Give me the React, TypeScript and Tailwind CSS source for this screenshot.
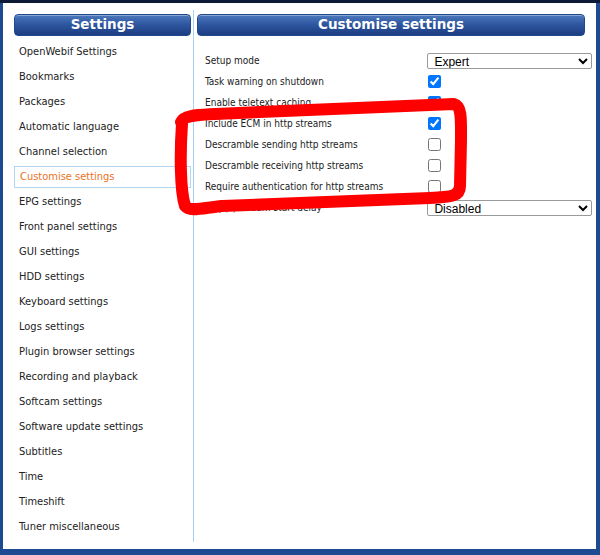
const menu = [
  "OpenWebif Settings",
  "Bookmarks",
  "Packages",
  "Automatic language",
  "Channel selection",
  "Customise settings",
  "EPG settings",
  "Front panel settings",
  "GUI settings",
  "HDD settings",
  "Keyboard settings",
  "Logs settings",
  "Plugin browser settings",
  "Recording and playback",
  "Softcam settings",
  "Software update settings",
  "Subtitles",
  "Time",
  "Timeshift",
  "Tuner miscellaneous",
];

type Row =
  | { label: string; kind: "select"; value: string }
  | { label: string; kind: "check"; checked: boolean };

const rows: Row[] = [
  { label: "Setup mode", kind: "select", value: "Expert" },
  { label: "Task warning on shutdown", kind: "check", checked: true },
  { label: "Enable teletext caching", kind: "check", checked: true },
  { label: "Include ECM in http streams", kind: "check", checked: true },
  { label: "Descramble sending http streams", kind: "check", checked: false },
  { label: "Descramble receiving http streams", kind: "check", checked: false },
  { label: "Require authentication for http streams", kind: "check", checked: false },
  { label: "Http(s) stream start delay", kind: "select", value: "Disabled" },
];

const headerCls =
  "h-[22px] rounded-[4px] border border-[#21478c] bg-gradient-to-b from-[#4b78bd] via-[#2d559d] to-[#1c3d82] shadow-[inset_0_1px_0_rgba(255,255,255,0.35)] flex items-center justify-center text-white font-bold text-[13.5px] leading-none font-['DejaVu_Sans',sans-serif]";

const App = () => {
  return (
    <div className="relative w-[600px] h-[555px] bg-[#1d4b92] border-t-[3px] border-t-[#0c1a36] pl-[3px] pr-[4px] pb-[6px] font-['DejaVu_Sans_Condensed','DejaVu_Sans',sans-serif] text-[#222]">
      <div className="h-full bg-white flex pl-[11px] pt-[7px] pb-[7px]">
        {/* left menu */}
        <div className="w-[177px] mt-[4px] flex flex-col">
          <div className={headerCls}>Settings</div>
          <div className="mt-[5px] flex flex-col">
            {menu.map((m) => (
              <div
                key={m}
                className={`h-[22px] mb-[3px] pl-[5px] flex items-center text-[11px] ${
                  m === "Customise settings"
                    ? "border border-[#b5d4ee] text-[#e8731f] pl-[4px]"
                    : ""
                }`}
              >
                {m}
              </div>
            ))}
          </div>
        </div>

        <div className="ml-[2px] w-px bg-[#a9d0f2]" />

        {/* right panel */}
        <div className="ml-[3px] w-[395px] mt-[4px] flex flex-col">
          <div className={`${headerCls} w-[388px]`}>Customise settings</div>
          <div className="mt-[14px] flex flex-col">
            {rows.map((r) => (
              <div key={r.label} className="h-[21px] flex items-center pl-[8px] text-[10px]">
                <div className="w-[223px]">{r.label}</div>
                {r.kind === "select" ? (
                  <select
                    defaultValue={r.value}
                    className="w-[165px] h-[16px] border border-[#9a9a9a] rounded-[2px] bg-white text-[12px] leading-none font-['Liberation_Sans',sans-serif] text-black pl-[2px]"
                  >
                    <option>{r.value}</option>
                  </select>
                ) : (
                  <input
                    type="checkbox"
                    defaultChecked={r.checked}
                    className="m-0 w-[13px] h-[13px]"
                  />
                )}
              </div>
            ))}
          </div>
        </div>
      </div>

      {/* red hand-drawn marking */}
      <svg
        className="absolute left-0 top-[-3px] pointer-events-none"
        width="600"
        height="555"
        viewBox="0 0 600 555"
      >
        <path
          d="M181 122 C184 115 198 115 215 114 L454 104 C462 106 461 120 461 140 L460 186 C460 196 452 197 430 198 L222 206 C202 208 190 212 185 206 C180 190 180 152 182 124"
          fill="none"
          stroke="#ff0000"
          strokeWidth="12"
          strokeLinecap="round"
          strokeLinejoin="round"
        />
      </svg>
    </div>
  );
};

export default App;
